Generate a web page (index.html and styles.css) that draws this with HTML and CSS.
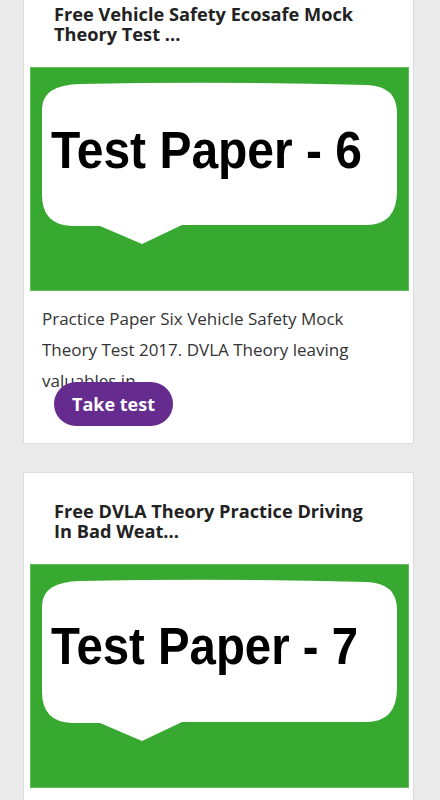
FILE: index.html
```html
<!DOCTYPE html>
<html lang="en">
<head>
<meta charset="utf-8">
<title>Theory Tests</title>
<link rel="stylesheet" href="styles.css">
</head>
<body>
<main class="list">
  <article class="card">
    <h2 class="card-title">Free Vehicle Safety Ecosafe Mock Theory Test ...</h2>
    <div class="thumb">
      <svg class="thumb-svg" viewBox="0 0 379 224" width="379" height="224">
        <rect width="379" height="224" fill="#37a930"/>
        <rect x="0.5" y="0.5" width="378" height="223" fill="none" stroke="#63bd5c" stroke-width="1"/>
        <path d="M50 17 Q189 14 337 18 Q367 19 367 46 V124 Q367 158 336 158 H152 L112 177 L70 159 H42 Q12 158 12 128 V42 Q12 18 50 17 Z" fill="#fff"/>
        <text x="21" y="101" class="thumb-text" textLength="311" lengthAdjust="spacingAndGlyphs">Test Paper - 6</text>
      </svg>
    </div>
    <p class="card-desc">Practice Paper Six Vehicle Safety Mock Theory Test 2017. DVLA Theory leaving valuables in</p>
    <a class="btn" href="#">Take test</a>
  </article>
  <article class="card">
    <h2 class="card-title">Free DVLA Theory Practice Driving In Bad Weat...</h2>
    <div class="thumb">
      <svg class="thumb-svg" viewBox="0 0 379 224" width="379" height="224">
        <rect width="379" height="224" fill="#37a930"/>
        <rect x="0.5" y="0.5" width="378" height="223" fill="none" stroke="#63bd5c" stroke-width="1"/>
        <path d="M50 17 Q189 14 337 18 Q367 19 367 46 V124 Q367 158 336 158 H152 L112 177 L70 159 H42 Q12 158 12 128 V42 Q12 18 50 17 Z" fill="#fff"/>
        <text x="21" y="100" class="thumb-text" textLength="307" lengthAdjust="spacingAndGlyphs">Test Paper - 7</text>
      </svg>
    </div>
    <p class="card-desc">Practice Paper Seven Driving In Bad Weather Mock Theory Test 2017. DVLA Theory driving in fog</p>
    <a class="btn" href="#">Take test</a>
  </article>
</main>
</body>
</html>
```
FILE: styles.css
```css
* { box-sizing: border-box; }
html, body { margin: 0; padding: 0; }
body {
  background: #ebebeb;
  font-family: "Open Sans", "Noto Sans", sans-serif;
  width: 440px;
  overflow: hidden;
}
.list {
  margin-top: -25px;
  display: flex;
  flex-direction: column;
  gap: 28px;
}
.card {
  margin-left: 23px;
  width: 391px;
  background: #fff;
  border: 1px solid #dcdcdc;
  padding: 0 0 17px 0;
}
.card-title {
  margin: 28px 36px 23px 30px;
  font-size: 18.2px;
  line-height: 20px;
  font-weight: 700;
  color: #222;
}
.thumb {
  margin-left: 6px;
  width: 379px;
  height: 224px;
}
.thumb-svg { display: block; }
.thumb-text {
  font-family: "Liberation Sans", Arial, sans-serif;
  font-weight: 700;
  font-size: 51px;
  fill: #000;
}
.card-desc {
  margin: 12px 20px 0 18px;
  height: 79px;
  font-size: 17px;
  line-height: 31px;
  color: #333;
}
.btn {
  display: inline-block;
  margin-left: 30px;
  height: 44px;
  line-height: 44px;
  padding: 0 18px;
  border-radius: 22px;
  background: #652b8f;
  color: #fff;
  font-size: 18px;
  font-weight: 700;
  text-decoration: none;
}
```
